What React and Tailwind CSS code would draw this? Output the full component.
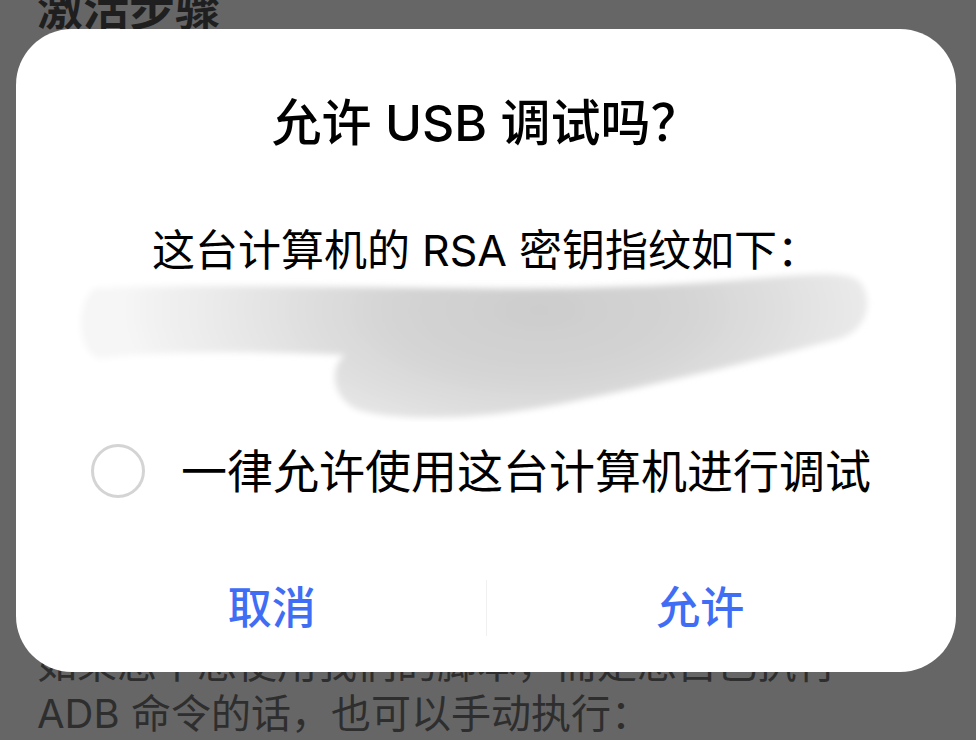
import React from "react";

const cjk = { fontFamily: '"Inter", "Noto Sans CJK SC", sans-serif' };

function Smudge() {
  return (
    <svg viewBox="16 268 940 154" className="block h-[154px] w-full">
      <defs>
        <radialGradient
          id="smudgeFill"
          cx="540"
          cy="310"
          r="420"
          gradientUnits="userSpaceOnUse"
          gradientTransform="translate(540 310) scale(1 0.45) translate(-540 -310)"
        >
          <stop offset="0" stopColor="#cdcdcd" />
          <stop offset="0.35" stopColor="#d4d4d4" />
          <stop offset="0.7" stopColor="#e6e6e6" />
          <stop offset="1" stopColor="#f6f6f6" />
        </radialGradient>
        <filter id="soft" x="-5%" y="-20%" width="110%" height="140%">
          <feGaussianBlur stdDeviation="3" />
        </filter>
      </defs>
      <path
        d="M 95 288 C 300 281, 500 296, 700 283 C 800 276, 845 268, 860 282 C 874 300, 868 328, 842 338 C 760 360, 650 386, 560 404 C 480 420, 392 422, 356 409 C 330 396, 330 366, 345 355 C 260 351, 150 351, 100 359 C 76 352, 75 302, 95 288 Z"
        fill="url(#smudgeFill)"
        filter="url(#soft)"
      />
    </svg>
  );
}

export default function App() {
  return (
    <div className="relative h-[740px] w-[976px] overflow-hidden bg-[#666666]" style={cjk}>
      {/* page behind the dialog */}
      <div className="px-[37px]">
        <h2 className="mt-[-15px] text-[46px] font-bold leading-none text-[#1f1f1f]">激活步骤</h2>
        <div className="mt-[608px] text-[40px] leading-[50px] text-[#2e2e2e]">
          <p className="whitespace-nowrap">如果您不想使用我们的脚本，而是想自己执行</p>
          <p className="whitespace-nowrap">ADB 命令的话，也可以手动执行：</p>
        </div>
      </div>

      {/* dialog */}
      <div className="absolute left-[16px] top-[29px] flex h-[643px] w-[940px] flex-col rounded-[56px] bg-white">
        <div className="mt-[64px] flex h-[60px] items-center justify-center text-[50px] font-medium text-black">
          允许 USB 调试吗？
        </div>
        <div className="mt-[79px] flex h-[36px] items-center justify-center text-[43px] text-black">
          这台计算机的 RSA 密钥指纹如下：
        </div>
        <Smudge />
        <div className="mt-[19px] flex h-[60px] items-center pl-[75px]">
          <span className="h-[54px] w-[54px] shrink-0 rounded-full border-[3px] border-[#d4d4d4]" />
          <span className="ml-[36px] whitespace-nowrap text-[46px] text-black">一律允许使用这台计算机进行调试</span>
        </div>
        <div className="mt-[79px] flex h-[56px] items-stretch px-[42px]">
          <button type="button" className="flex flex-1 items-center justify-center text-[44px] font-medium text-[#3f6ef5]">
            取消
          </button>
          <div className="w-px bg-[#f0f0f0]" />
          <button type="button" className="flex flex-1 items-center justify-center text-[44px] font-medium text-[#3f6ef5]">
            允许
          </button>
        </div>
      </div>
    </div>
  );
}
